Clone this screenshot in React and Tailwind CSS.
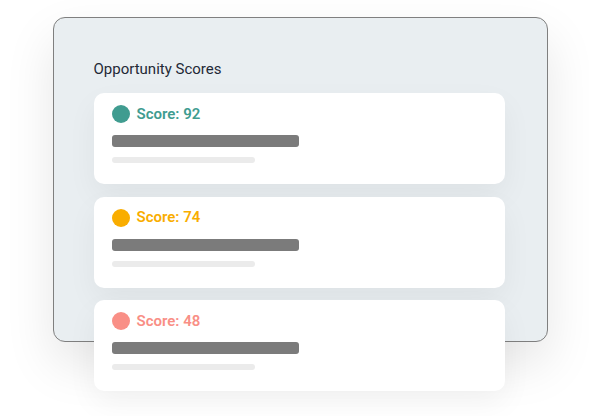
const scores = [
  { value: 92, dot: "bg-[#409c90]", text: "text-[#409c90]" },
  { value: 74, dot: "bg-[#f9ad00]", text: "text-[#f9ad00]" },
  { value: 48, dot: "bg-[#f98f86]", text: "text-[#f98f86]" },
];

const ScoreCard = ({ item }) => (
  <div className="w-[411px] h-[91px] shrink-0 bg-white rounded-[10px] px-[18px] pt-[12px] shadow-[0_12px_30px_rgba(0,0,0,0.05)]">
    <div className="flex items-center gap-[7px] h-[18px]">
      <span className={`w-[18px] h-[18px] rounded-full ${item.dot}`} />
      <span className={`text-[15px] font-semibold leading-none ${item.text}`}>
        Score: {item.value}
      </span>
    </div>
    <div className="mt-[12px] w-[187px] h-[12px] rounded-[3px] bg-[#7b7b7b]" />
    <div className="mt-[10px] w-[143px] h-[6px] rounded-full bg-[#ebebeb]" />
  </div>
);

const App = () => {
  return (
    <div className="w-[589px] h-[416px] bg-white overflow-hidden pt-[17px] pl-[53px]" style={{ fontFamily: "Roboto, 'Liberation Sans', sans-serif" }}>
      {/* Panel */}
      <div className="w-[495px] h-[325px] bg-[#e9eef1] border-[1.5px] border-[#7f7f7f] rounded-[12px] pt-[41px] pl-[39.5px] shadow-[0_22px_50px_rgba(0,0,0,0.10)]">
        <h2 className="text-[15px] leading-[20px] text-[#1f2937] mb-[14px]">Opportunity Scores</h2>
        <div className="flex flex-col gap-[12.5px]">
          {scores.map((item) => (
            <ScoreCard key={item.value} item={item} />
          ))}
        </div>
      </div>
    </div>
  );
};

export default App;
